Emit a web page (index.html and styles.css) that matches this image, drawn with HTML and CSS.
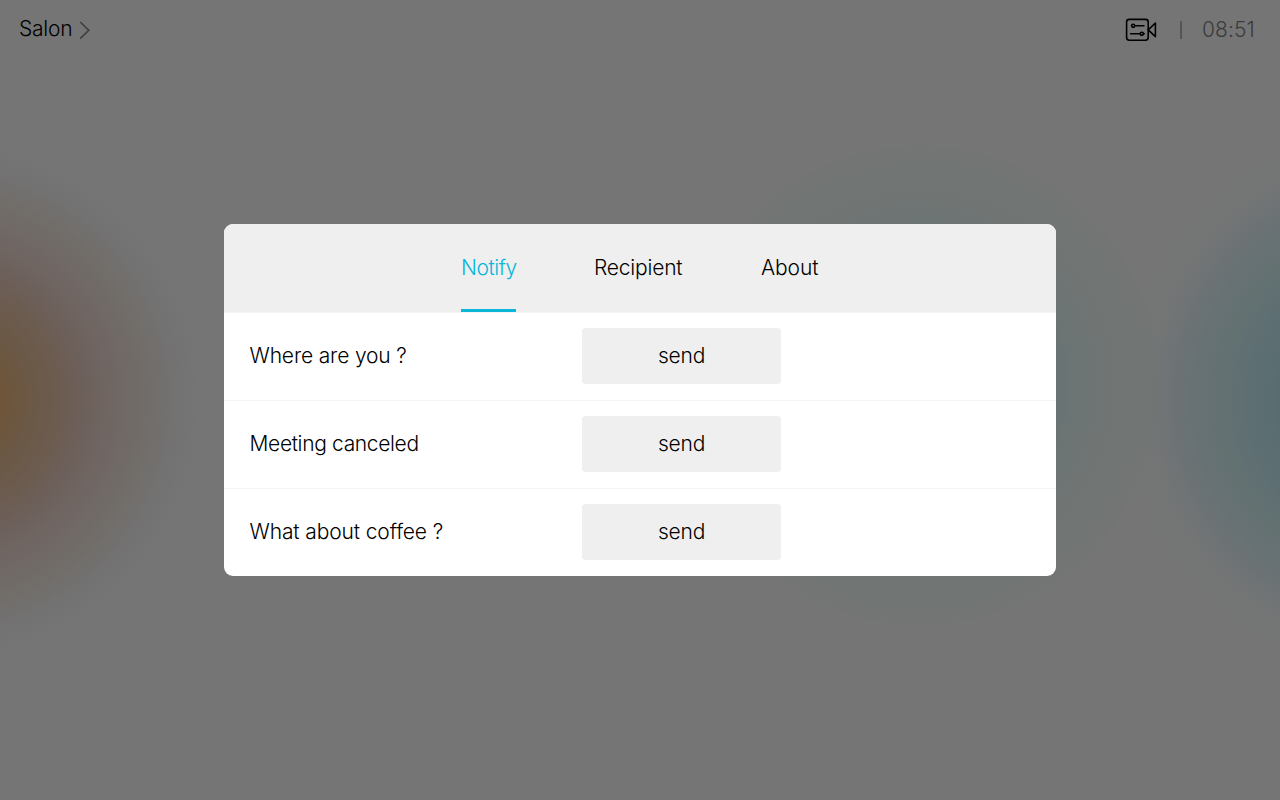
FILE: index.html
```html
<!DOCTYPE html>
<html lang="en">
<head>
<meta charset="utf-8">
<title>Salon</title>
<link rel="stylesheet" href="styles.css">
</head>
<body>
<div class="screen">
  <header class="topbar">
    <div class="room"><span class="room-name">Salon</span>
      <svg class="chevron" width="12" height="20" viewBox="0 0 12 20" fill="none" stroke="#3f3f3f" stroke-width="1.6"><path d="M1.2 2l8.6 8.3L1.2 18.6"/></svg>
    </div>
    <div class="status">
      <svg class="camera" width="34" height="26" viewBox="0 0 34 26" fill="none" stroke="#000" stroke-width="1.6" stroke-linejoin="round" stroke-linecap="round"><rect x="2.6" y="2.4" width="21.6" height="20.8" rx="2.6"/><path d="M24.2 12.8l7.2-6.8v13.6z"/><circle cx="9.2" cy="8.8" r="1.6"/><path d="M10.8 8.8h9.2M6.6 16.8h9.2"/><circle cx="17.8" cy="16.8" r="1.6"/><path d="M19.4 16.8h.8"/></svg>
      <span class="divider"></span>
      <span class="clock">08:51</span>
    </div>
  </header>
  <main class="panel">
    <nav class="tabs">
      <span class="tab tab-active">Notify</span>
      <span class="tab tab-recipient">Recipient</span>
      <span class="tab tab-about">About</span>
    </nav>
    <div class="row"><span class="label label-where">Where are you ?</span><button class="send">send</button></div>
    <div class="row"><span class="label label-meeting">Meeting canceled</span><button class="send">send</button></div>
    <div class="row"><span class="label label-coffee">What about coffee ?</span><button class="send">send</button></div>
  </main>
</div>
</body>
</html>
```
FILE: styles.css
```css
* { box-sizing: border-box; }
body { margin: 0; font: 300 21px/26px Inter, "Liberation Sans", sans-serif; color: #000; }
.screen {
  width: 1280px; height: 800px; overflow: hidden;
  display: flex; flex-direction: column; align-items: center;
  background:
    radial-gradient(circle at -57px 400px, #6e5539 57px, #6b5845 85px, #6c5c50 117px, #6d605b 140px, #706764 172px, #716d69 205px, #737272 232px, rgba(117,117,117,0) 260px),
    radial-gradient(circle at 1398px 400px, #596d71 118px, #5e6f73 150px, #637171 178px, rgba(102,113,116,.9) 205px, rgba(106,114,117,.65) 228px, rgba(112,117,117,.3) 250px, rgba(117,117,117,0) 280px),
    radial-gradient(circle at 920px 385px, #677373 0, #697373 135px, #6d7474 162px, #717573 200px, #727573 236px, #757575 243px);
}
.topbar { width: 100%; height: 224px; padding: 16px 24px 0 19px; display: flex; justify-content: space-between; align-items: flex-start; }
.room { display: flex; align-items: center; gap: 8px; }
.room-name { width: 52px; white-space: nowrap; letter-spacing: -.25px; }
.chevron { margin-top: 2px; }
.status { display: flex; align-items: center; color: #3c3c3c; }
.camera { margin: 1px 22px 0 0; }
.divider { width: 2px; height: 18px; background: #555; margin: 1px 20px 0 0; }
.clock { width: 54px; white-space: nowrap; letter-spacing: .1px; }
.panel { width: 832px; height: 352px; border-radius: 9px; overflow: hidden; background: #fff; }
.tabs { height: 88px; background: #efefef; display: flex; justify-content: center; gap: 78px; }
.tab { height: 88px; padding-top: 31px; white-space: nowrap; }
.tab-active { width: 55px; letter-spacing: -.45px; color: #07b6da; border-bottom: 3px solid #0bb6d8; }
.tab-recipient { width: 89px; letter-spacing: -.2px; }
.tab-about { width: 58px; letter-spacing: -.1px; }
.row { height: 88px; display: grid; grid-template-columns: 332.5px 199px; align-items: center; padding: 0 0 1px 25.5px; border-top: 1px solid #f4f4f4; }
.label { white-space: nowrap; padding-bottom: 1px; }
.label-where { letter-spacing: -.15px; }
.label-meeting { letter-spacing: -.35px; }
.label-coffee { letter-spacing: -.12px; }
.send { height: 56px; border: 0; border-radius: 4px; background: #efefef; color: #000; font: inherit; letter-spacing: -.2px; padding: 0 0 1px; }
```
